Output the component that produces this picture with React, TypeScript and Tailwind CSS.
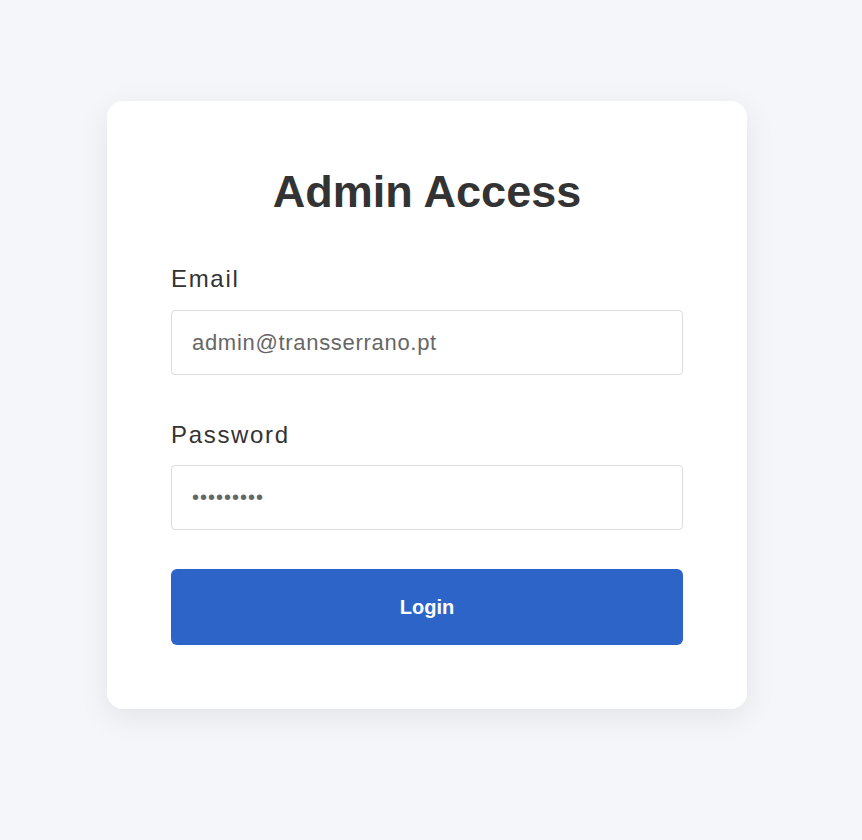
import { useState } from "react";

export default function App() {
  const [email, setEmail] = useState("admin@transserrano.pt");
  const [password, setPassword] = useState("password1");

  return (
    <div className="min-h-screen w-full bg-[#f5f6fa] font-['Liberation_Sans',Arial,sans-serif] pt-[101px] pr-2">
      <div className="mx-auto w-[640px] rounded-2xl bg-white px-16 py-16 shadow-[0_8px_30px_rgba(0,0,0,0.08)]">
        <h1 className="mb-[42px] text-center text-[45px] font-bold leading-[54px] text-[#333]">
          Admin Access
        </h1>

        <form className="flex flex-col" onSubmit={(e) => e.preventDefault()}>
          {/* email */}
          <label className="mb-[13px] block text-[24px] leading-[36px] tracking-[0.07em] text-[#333]">
            Email
          </label>
          <input
            type="email"
            value={email}
            onChange={(e) => setEmail(e.target.value)}
            className="h-[65px] w-full rounded border border-[#ddd] px-5 text-[22px] tracking-[0.7px] text-[#666] outline-none"
          />

          {/* password */}
          <label className="mt-[42px] mb-[12px] block text-[24px] leading-[36px] tracking-[0.07em] text-[#333]">
            Password
          </label>
          <input
            type="password"
            value={password}
            onChange={(e) => setPassword(e.target.value)}
            className="h-[65px] w-full rounded border border-[#ddd] px-5 text-[20px] tracking-[1px] text-[#666] outline-none"
          />

          <button
            type="submit"
            className="mt-[39px] h-[76px] w-full rounded-md bg-[#2c64c8] text-[20px] font-bold text-white"
          >
            Login
          </button>
        </form>
      </div>
    </div>
  );
}
